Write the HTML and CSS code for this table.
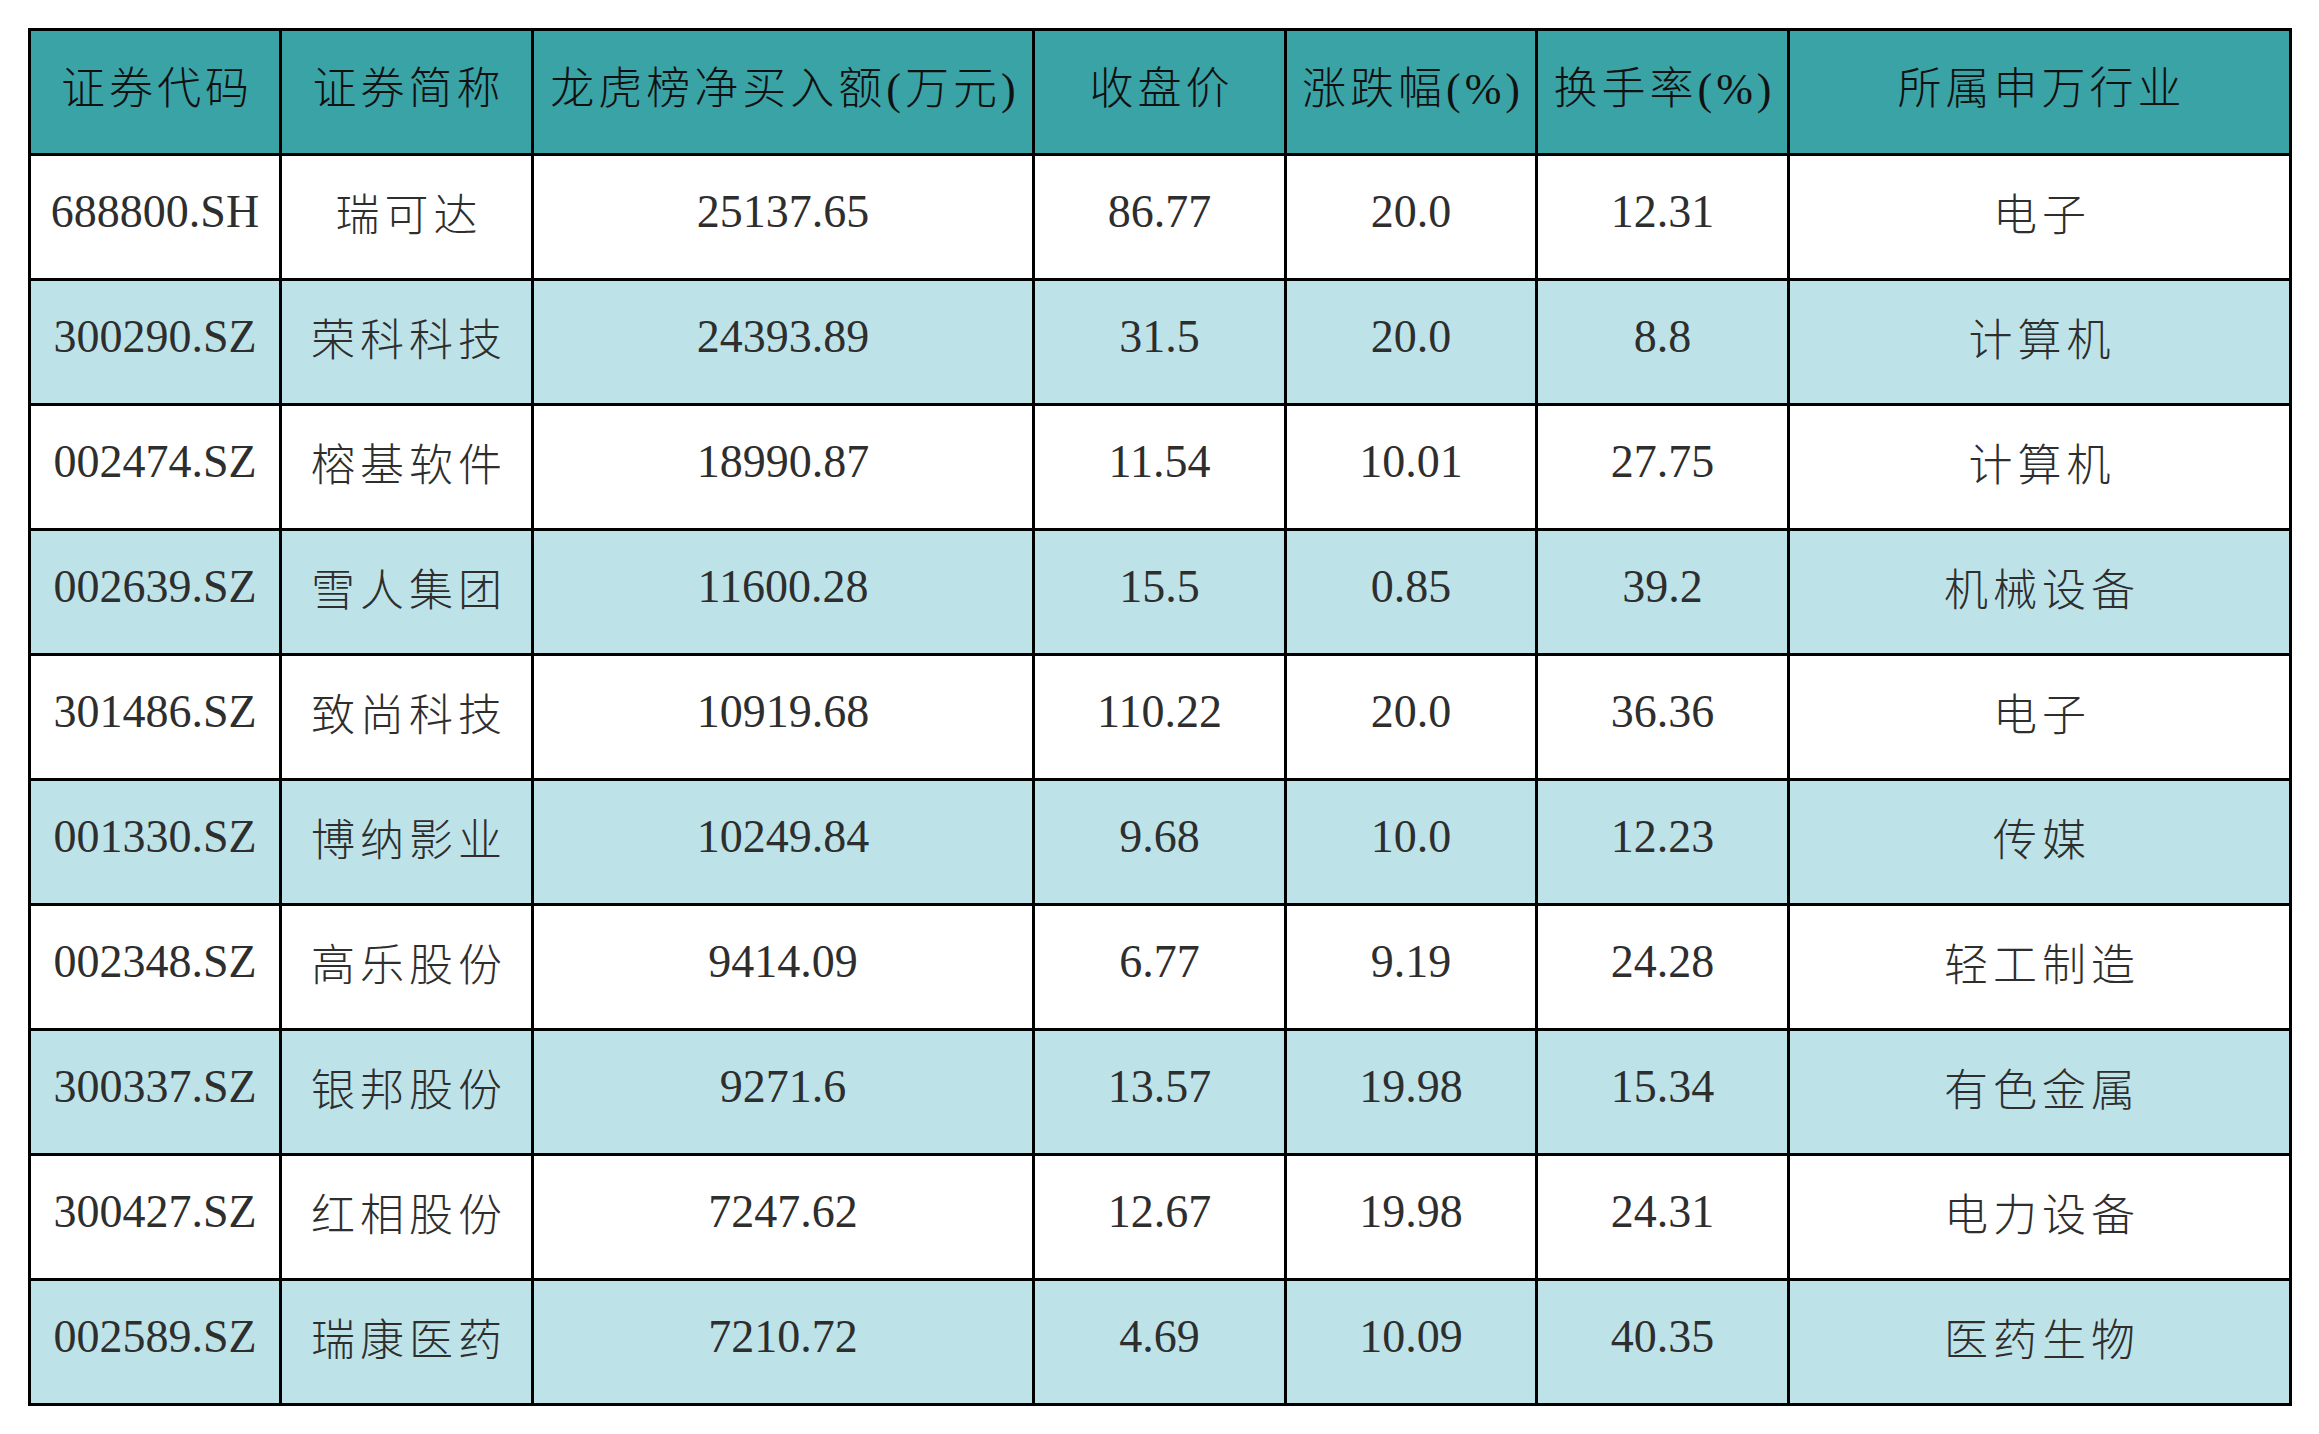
FILE: index.html
```html
<!DOCTYPE html>
<html lang="zh-CN">
<head>
<meta charset="utf-8">
<title>龙虎榜净买入额</title>
<link rel="stylesheet" href="styles.css">
</head>
<body>
<div class="sheet">
  <div class="grid">
    <div class="cell head">证券代码</div>
    <div class="cell head">证券简称</div>
    <div class="cell head">龙虎榜净买入额(万元)</div>
    <div class="cell head">收盘价</div>
    <div class="cell head">涨跌幅(%)</div>
    <div class="cell head">换手率(%)</div>
    <div class="cell head">所属申万行业</div>

    <div class="cell">688800.SH</div><div class="cell cn">瑞可达</div><div class="cell">25137.65</div><div class="cell">86.77</div><div class="cell">20.0</div><div class="cell">12.31</div><div class="cell cn">电子</div>

    <div class="cell alt">300290.SZ</div><div class="cell alt cn">荣科科技</div><div class="cell alt">24393.89</div><div class="cell alt">31.5</div><div class="cell alt">20.0</div><div class="cell alt">8.8</div><div class="cell alt cn">计算机</div>

    <div class="cell">002474.SZ</div><div class="cell cn">榕基软件</div><div class="cell">18990.87</div><div class="cell">11.54</div><div class="cell">10.01</div><div class="cell">27.75</div><div class="cell cn">计算机</div>

    <div class="cell alt">002639.SZ</div><div class="cell alt cn">雪人集团</div><div class="cell alt">11600.28</div><div class="cell alt">15.5</div><div class="cell alt">0.85</div><div class="cell alt">39.2</div><div class="cell alt cn">机械设备</div>

    <div class="cell">301486.SZ</div><div class="cell cn">致尚科技</div><div class="cell">10919.68</div><div class="cell">110.22</div><div class="cell">20.0</div><div class="cell">36.36</div><div class="cell cn">电子</div>

    <div class="cell alt">001330.SZ</div><div class="cell alt cn">博纳影业</div><div class="cell alt">10249.84</div><div class="cell alt">9.68</div><div class="cell alt">10.0</div><div class="cell alt">12.23</div><div class="cell alt cn">传媒</div>

    <div class="cell">002348.SZ</div><div class="cell cn">高乐股份</div><div class="cell">9414.09</div><div class="cell">6.77</div><div class="cell">9.19</div><div class="cell">24.28</div><div class="cell cn">轻工制造</div>

    <div class="cell alt">300337.SZ</div><div class="cell alt cn">银邦股份</div><div class="cell alt">9271.6</div><div class="cell alt">13.57</div><div class="cell alt">19.98</div><div class="cell alt">15.34</div><div class="cell alt cn">有色金属</div>

    <div class="cell">300427.SZ</div><div class="cell cn">红相股份</div><div class="cell">7247.62</div><div class="cell">12.67</div><div class="cell">19.98</div><div class="cell">24.31</div><div class="cell cn">电力设备</div>

    <div class="cell alt">002589.SZ</div><div class="cell alt cn">瑞康医药</div><div class="cell alt">7210.72</div><div class="cell alt">4.69</div><div class="cell alt">10.09</div><div class="cell alt">40.35</div><div class="cell alt cn">医药生物</div>
  </div>
</div>
</body>
</html>
```

FILE: styles.css
```css
* {
  box-sizing: border-box;
}

html, body {
  margin: 0;
  padding: 0;
  background: #ffffff;
}

.sheet {
  padding: 28px 0 0 28px;
}

.grid {
  display: grid;
  grid-template-columns: 251px 252px 501px 252px 251px 252px 502px;
  grid-auto-rows: 125px;
  width: 2264px;
  border-left: 3px solid #000;
  border-top: 3px solid #000;
}

.cell {
  display: flex;
  align-items: center;
  justify-content: center;
  border-right: 3px solid #000;
  border-bottom: 3px solid #000;
  background: #ffffff;
  color: #2e2e2e;
  font-family: "Liberation Serif", "Noto Sans CJK SC", serif;
  font-size: 46px;
  padding-bottom: 11px;
  white-space: nowrap;
}

.cell.cn {
  font-size: 44px;
  letter-spacing: 5px;
  padding-left: 5px;
  font-weight: 300;
}

.cell.alt {
  background: #bde3e9;
}

.cell.head {
  background: #3aa3a6;
  color: #111111;
  font-size: 44px;
  font-weight: 300;
  letter-spacing: 4px;
  padding-left: 4px;
  padding-bottom: 15px;
}
```
